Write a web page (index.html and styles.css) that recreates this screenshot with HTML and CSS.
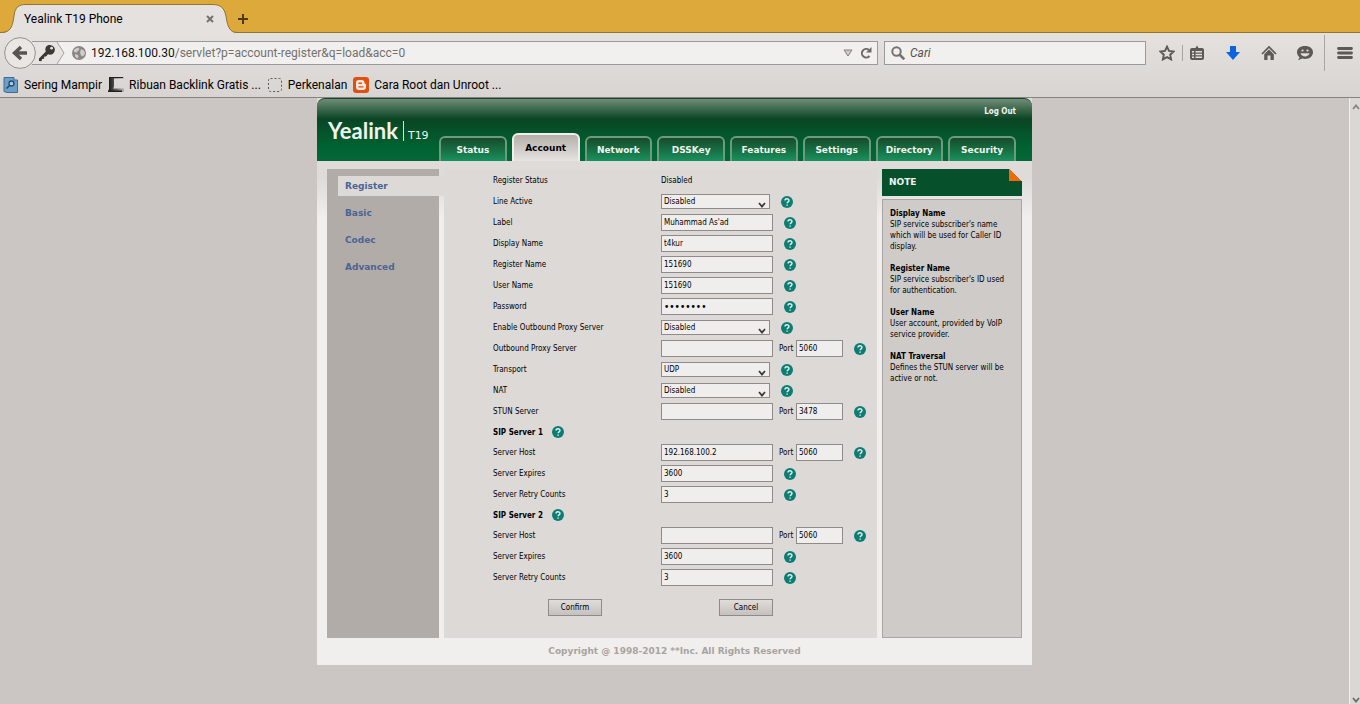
FILE: index.html
```
<!DOCTYPE html>
<html lang="en">

<head>
    <meta charset="UTF-8">
    <meta name="viewport" content="width=device-width, initial-scale=1.0">
    <title>Yealink T19 Phone</title>
    <link rel="stylesheet" href="styles.css">
</head>

<body>
    <!-- shared icons -->
    <svg class="sprite" aria-hidden="true">
        <symbol id="help" viewBox="0 0 12 12">
            <circle cx="6" cy="6" r="6" fill="#0b7d72" />
            <path d="M4 4.6C4 2.2 8 2.2 8 4.5 8 5.9 6.1 5.8 6.1 7.3M6.1 8.4v1.4" fill="none" stroke="#e6f1ee" stroke-width="1.4" />
        </symbol>
        <symbol id="chevron" viewBox="0 0 8 6">
            <path d="M1 1l3 3.6L7 1" fill="none" stroke="#3c3a39" stroke-width="1.8" />
        </symbol>
    </svg>

    <header class="browser">
        <div class="tab-strip">
            <div class="tab">
                <svg class="tab-shape" viewBox="0 0 238 29" aria-hidden="true">
                    <path d="M0 29C8 29 11 26 13 18L14 12C15 3 19 .5 26 .5H212C220 .5 224 3 226 12L227 18C229 26 232 29 238 29Z" fill="#e4e1df" />
                    <path d="M0 28.500C8 28.500 11 26 13 18L14 12C15 3 19 .5 26 .5H212C220 .5 224 3 226 12L227 18C229 26 232 28.500 238 28.500" fill="none" stroke="#8f7534" />
                </svg>
                <span class="tab-title">Yealink T19 Phone</span>
                <button class="tab-close" aria-label="Close tab">
                    <svg viewBox="0 0 8 8"><path d="M1 1l6 6M7 1L1 7" stroke="#77716d" stroke-width="2" /></svg>
                </button>
            </div>
            <button class="tab-new" aria-label="New tab">
                <svg viewBox="0 0 10 10"><path d="M5 0v10M0 5h10" stroke="#4b3c18" stroke-width="2" /></svg>
            </button>
        </div>

        <div class="toolbar">
            <button class="back" aria-label="Back">
                <svg viewBox="0 0 32 32">
                    <circle cx="16" cy="16" r="15.400" fill="#e9e6e4" stroke="#96918e" />
                    <path d="M17 10l-6.500 6 6.500 6M11 16h12" fill="none" stroke="#5a5451" stroke-width="3.400" />
                </svg>
            </button>
            <div class="url-bar">
                <svg class="key" viewBox="0 0 36 22" aria-hidden="true">
                    <path d="M0 0H25L32 11 25 22H0" fill="#e6e3e1" />
                    <path d="M25 0L32 11 25 22" fill="none" stroke="#a5a09d" />
                    <path d="M15.500 3.500C20 1.500 25 6 22 10.500 20.500 12.800 18 13 16 12.200L14 14.500 12.300 14.600 12 16.700 10 17 9.500 19.200 7 19V16.500L13.800 9.500C12.800 7 13.500 4.500 15.500 3.500Z" fill="#3b3735" />
                    <circle cx="19.600" cy="6.200" r="1.400" fill="#e6e3e1" />
                </svg>
                <svg class="globe" viewBox="0 0 14 14" aria-hidden="true">
                    <circle cx="7" cy="7" r="7" fill="#8b8683" />
                    <path d="M2 3.500L6 1.500 7.500 3 6 5 4.500 6.500 2 6ZM9 3l3 1.500 1 3-2 3-2-1-1-3ZM3 8l3 1 .5 2-1 1.500L3 10.500Z" fill="#d0ccca" />
                </svg>
                <div class="url-field">
                    <div class="url-text" aria-hidden="true"><b>192.168.100.30</b>/servlet?p=account-register&amp;q=load&amp;acc=0</div>
                    <input type="text" aria-label="Address">
                </div>
                <svg class="dropmark" viewBox="0 0 10 8" aria-hidden="true"><path d="M1 1h8L5 7Z" fill="#cfcbc8" stroke="#85807d" /></svg>
                <button class="reload" aria-label="Reload">
                    <svg viewBox="0 0 12 12"><path d="M9.500 9A4.300 4.300 0 1 1 8.800 2.800" fill="none" stroke="#6d6865" stroke-width="2" /><path d="M11.500 0v5.500H6Z" fill="#6d6865" /></svg>
                </button>
            </div>
            <div class="search-bar">
                <svg viewBox="0 0 14 14" aria-hidden="true"><circle cx="5.500" cy="5.500" r="4.200" fill="none" stroke="#78736f" stroke-width="2" /><path d="M8.500 8.500l4.800 4.800" stroke="#78736f" stroke-width="2.600" /></svg>
                <input type="text" placeholder="Cari" aria-label="Search">
            </div>
            <div class="tools">
                <button aria-label="Bookmark this page">
                    <svg viewBox="0 0 16 16"><path d="M8 1.600l2 4.300 4.600.6-3.400 3.200.9 4.700L8 12.100 3.900 14.400l.9-4.700L1.400 6.500 6 5.900Z" fill="none" stroke="#5f5956" stroke-width="1.900" /></svg>
                </button>
                <button class="divided" aria-label="Bookmarks">
                    <svg viewBox="0 0 16 16"><path d="M5 3h1.500L8 .5 9.500 3H13q2 0 2 2v8q0 2-2 2H3q-2 0-2-2V5q0-2 2-2Z" fill="#5f5956" /><path d="M3 6h2v1.500H3zM6.500 6H13v1.500H6.500zM3 8.800h2v1.500H3zM6.500 8.800H13v1.500H6.500zM3 11.600h2V13H3zM6.500 11.600H13V13H6.500z" fill="#e0dddb" /></svg>
                </button>
                <button aria-label="Downloads">
                    <svg viewBox="0 0 16 16"><path d="M5 1h6v6h4L8 15 1 7h4Z" fill="#0b63e0" /></svg>
                </button>
                <button aria-label="Home">
                    <svg viewBox="0 0 16 16"><path d="M1 9l7-7 7 7" fill="none" stroke="#5f5956" stroke-width="1.700" /><path d="M3.200 9.200L8 4.600l4.800 4.600V15H9.500v-4.500h-3V15H3.200Z" fill="#5f5956" /></svg>
                </button>
                <button aria-label="Chat">
                    <svg viewBox="0 0 16 16"><path d="M8 1c5 0 8 2.700 8 6.300S13 14 8 14c-1 0-2-.1-2.800-.4L1 15.200l1.600-3C1 11 0 9.500 0 7.300 0 3.700 3 1 8 1Z" fill="#5f5956" /><circle cx="5.500" cy="5.500" r="1.100" fill="#e0dddb" /><circle cx="10.500" cy="5.500" r="1.100" fill="#e0dddb" /><path d="M3.500 8.300h9C11.500 12.500 4.500 12.500 3.500 8.300Z" fill="#e0dddb" /></svg>
                </button>
                <button class="menu-button" aria-label="Menu">
                    <svg viewBox="0 0 16 16"><path d="M1.500 3.500h13M1.500 8h13M1.500 12.500h13" stroke="#5f5956" stroke-width="2.800" stroke-linecap="round" /></svg>
                </button>
            </div>
        </div>

        <nav class="bookmarks">
            <a href="#">
                <svg viewBox="0 0 16 16" aria-hidden="true"><path d="M1 .5h10V3h3.500v12.500H4l-3-1Z" fill="#6d9ec4" stroke="#3c6c95" /><circle cx="8.500" cy="6.500" r="2.500" fill="#a8cbe4" stroke="#1f4a72" stroke-width="1.300" /><path d="M6.500 8.500l-3 3" stroke="#1f4a72" stroke-width="1.600" /></svg>
                Sering Mampir
            </a>
            <a href="#">
                <svg viewBox="0 0 16 16" aria-hidden="true"><defs><linearGradient id="fade"><stop offset="0" stop-color="#111" /><stop offset="1" stop-color="#b9b4b1" /></linearGradient></defs><path d="M1 0h15v1.500H6V10l-1 1.500H16V15H0L1 12Z" fill="url(#fade)" /><path d="M0 13.500h14V15H0ZM1 0h14v1H1Z" fill="#222" /></svg>
                Ribuan Backlink Gratis ...
            </a>
            <a href="#">
                <svg viewBox="0 0 16 16" aria-hidden="true"><rect x="1.500" y="1.500" width="13" height="13" rx="2" fill="none" stroke="#5b5653" stroke-dasharray="2 2" /></svg>
                Perkenalan
            </a>
            <a href="#">
                <svg viewBox="0 0 16 16" aria-hidden="true"><rect width="16" height="16" rx="3" fill="#e0500f" /><path d="M5.800 3h3q2.600 0 2.600 2.600 0 1.200.8 1.200.8.200.8 1V10q0 3-3 3H6q-3 0-3-3V6q0-3 2.800-3Z" fill="#f3e8e2" /><path d="M6 6.200h2.500M6 9.900h4" stroke="#e0500f" stroke-width="1.400" stroke-linecap="round" /></svg>
                Cara Root dan Unroot ...
            </a>
        </nav>
    </header>

    <div class="viewport">
        <main class="page">
            <div class="phone">
                <div class="banner">
                    <div class="brand"><span class="logo">Yealink</span><span class="model">T19</span></div>
                    <div class="banner-right">
                        <a class="logout" href="#">Log Out</a>
                        <nav class="menu">
                            <a href="#">Status</a>
                            <a href="#" class="active">Account</a>
                            <a href="#">Network</a>
                            <a href="#">DSSKey</a>
                            <a href="#">Features</a>
                            <a href="#">Settings</a>
                            <a href="#">Directory</a>
                            <a href="#">Security</a>
                        </nav>
                    </div>
                </div>

                <div class="columns">
                    <nav class="side">
                        <a href="#" class="active">Register</a>
                        <a href="#">Basic</a>
                        <a href="#">Codec</a>
                        <a href="#">Advanced</a>
                    </nav>

                    <form class="account">
                        <div class="row">
                            <span class="name">Register Status</span>
                            <span>Disabled</span>
                        </div>
                        <div class="row">
                            <label class="name" for="active">Line Active</label>
                            <span class="select"><select id="active"><option>Disabled</option><option>Enabled</option></select><svg><use href="#chevron" /></svg></span>
                            <svg class="help"><use href="#help" /></svg>
                        </div>
                        <div class="row">
                            <label class="name" for="label">Label</label>
                            <input id="label" type="text" value="Muhammad As'ad">
                            <svg class="help"><use href="#help" /></svg>
                        </div>
                        <div class="row">
                            <label class="name" for="display">Display Name</label>
                            <input id="display" type="text" value="t4kur">
                            <svg class="help"><use href="#help" /></svg>
                        </div>
                        <div class="row">
                            <label class="name" for="register">Register Name</label>
                            <input id="register" type="text" value="151690">
                            <svg class="help"><use href="#help" /></svg>
                        </div>
                        <div class="row">
                            <label class="name" for="user">User Name</label>
                            <input id="user" type="text" value="151690">
                            <svg class="help"><use href="#help" /></svg>
                        </div>
                        <div class="row">
                            <label class="name" for="password">Password</label>
                            <input id="password" type="password" value="12345678">
                            <svg class="help"><use href="#help" /></svg>
                        </div>
                        <div class="row">
                            <label class="name" for="outbound">Enable Outbound Proxy Server</label>
                            <span class="select"><select id="outbound"><option>Disabled</option><option>Enabled</option></select><svg><use href="#chevron" /></svg></span>
                            <svg class="help"><use href="#help" /></svg>
                        </div>
                        <div class="row">
                            <label class="name" for="proxy">Outbound Proxy Server</label>
                            <input id="proxy" type="text">
                            <label class="port" for="proxy-port">Port</label>
                            <input id="proxy-port" class="short" type="text" value="5060">
                            <svg class="help"><use href="#help" /></svg>
                        </div>
                        <div class="row">
                            <label class="name" for="transport">Transport</label>
                            <span class="select"><select id="transport"><option>UDP</option><option>TCP</option></select><svg><use href="#chevron" /></svg></span>
                            <svg class="help"><use href="#help" /></svg>
                        </div>
                        <div class="row">
                            <label class="name" for="nat">NAT</label>
                            <span class="select"><select id="nat"><option>Disabled</option><option>STUN</option></select><svg><use href="#chevron" /></svg></span>
                            <svg class="help"><use href="#help" /></svg>
                        </div>
                        <div class="row">
                            <label class="name" for="stun">STUN Server</label>
                            <input id="stun" type="text">
                            <label class="port" for="stun-port">Port</label>
                            <input id="stun-port" class="short" type="text" value="3478">
                            <svg class="help"><use href="#help" /></svg>
                        </div>

                        <div class="row section">
                            <b>SIP Server 1</b>
                            <svg class="help"><use href="#help" /></svg>
                        </div>
                        <div class="row">
                            <label class="name" for="host1">Server Host</label>
                            <input id="host1" type="text" value="192.168.100.2">
                            <label class="port" for="port1">Port</label>
                            <input id="port1" class="short" type="text" value="5060">
                            <svg class="help"><use href="#help" /></svg>
                        </div>
                        <div class="row">
                            <label class="name" for="expires1">Server Expires</label>
                            <input id="expires1" type="text" value="3600">
                            <svg class="help"><use href="#help" /></svg>
                        </div>
                        <div class="row">
                            <label class="name" for="retry1">Server Retry Counts</label>
                            <input id="retry1" type="text" value="3">
                            <svg class="help"><use href="#help" /></svg>
                        </div>

                        <div class="row section">
                            <b>SIP Server 2</b>
                            <svg class="help"><use href="#help" /></svg>
                        </div>
                        <div class="row">
                            <label class="name" for="host2">Server Host</label>
                            <input id="host2" type="text">
                            <label class="port" for="port2">Port</label>
                            <input id="port2" class="short" type="text" value="5060">
                            <svg class="help"><use href="#help" /></svg>
                        </div>
                        <div class="row">
                            <label class="name" for="expires2">Server Expires</label>
                            <input id="expires2" type="text" value="3600">
                            <svg class="help"><use href="#help" /></svg>
                        </div>
                        <div class="row">
                            <label class="name" for="retry2">Server Retry Counts</label>
                            <input id="retry2" type="text" value="3">
                            <svg class="help"><use href="#help" /></svg>
                        </div>

                        <div class="buttons">
                            <button type="button">Confirm</button>
                            <button type="button">Cancel</button>
                        </div>
                    </form>

                    <aside class="note">
                        <h2>NOTE</h2>
                        <dl>
                            <dt>Display Name</dt>
                            <dd>SIP service subscriber's name which will be used for Caller ID display.</dd>
                            <dt>Register Name</dt>
                            <dd>SIP service subscriber's ID used for authentication.</dd>
                            <dt>User Name</dt>
                            <dd>User account, provided by VoIP service provider.</dd>
                            <dt>NAT Traversal</dt>
                            <dd>Defines the STUN server will be active or not.</dd>
                        </dl>
                    </aside>
                </div>

                <footer>Copyright @ 1998-2012 **Inc. All Rights Reserved</footer>
            </div>
        </main>
        <div class="scrollbar" aria-hidden="true">
            <svg viewBox="0 0 8 6"><path d="M1 5l3-3.500L7 5" fill="none" stroke="#8a8582" stroke-width="1.800" /></svg>
            <svg viewBox="0 0 8 6"><path d="M1 1l3 3.500L7 1" fill="none" stroke="#6f6a67" stroke-width="1.800" /></svg>
        </div>
    </div>
</body>

</html>
```
FILE: styles.css
```
:root {
    --pageBg: #cbc6c3;
    --panel: #f0efed;
    --content: #dcd9d7;
    --field: #efeeec;
    --line: #8f8b89;
    --green: #06502c;
}

* {
    padding: 0;
    margin: 0;
    box-sizing: border-box;
}

body {
    display: flex;
    flex-direction: column;
    height: 100vh;
    overflow: hidden;
    font-family: "DejaVu Sans Condensed", "DejaVu Sans", sans-serif;
    font-size: 8px;
    color: #000;
    background-color: var(--pageBg);
}

a {
    color: inherit;
    text-decoration: none;
}

button,
input,
select {
    font: inherit;
    color: inherit;
}

svg {
    display: block;
    flex: none;
}

.sprite {
    position: absolute;
    width: 0;
    height: 0;
}

/* browser window start */
.browser {
    flex: none;
    border-bottom: 1px solid #878381;
    background: linear-gradient(#e4e1df 33px, #d8d4d1);
    font-family: Roboto, sans-serif;
    font-size: 12px;
}

.browser button {
    border: 0;
    background: none;
}

.browser button svg {
    width: 100%;
    height: 100%;
}

.tab-strip {
    display: flex;
    align-items: flex-end;
    height: 33px;
    border-bottom: 1px solid #8f7534;
    background-color: #dca93a;
}

.tab {
    position: relative;
    display: flex;
    align-items: center;
    width: 238px;
    height: 29px;
    margin-bottom: -1px;
    padding: 0 24px;
}

.tab-shape {
    position: absolute;
    inset: 0;
    width: 100%;
    height: 100%;
}

.tab-title {
    position: relative;
    flex: 1;
}

.tab-close {
    position: relative;
    width: 8px;
    height: 8px;
}

.tab-new {
    width: 10px;
    height: 10px;
    margin-bottom: 8px;
}

.toolbar {
    display: flex;
    align-items: center;
    height: 40px;
    padding: 0 7px 0 4px;
}

.back {
    position: relative;
    z-index: 1;
    width: 32px;
    height: 32px;
}

.url-bar,
.search-bar {
    display: flex;
    align-items: center;
    height: 24px;
    border: 1px solid #979c9a;
    background-color: #f1f0ee;
}

.url-bar {
    flex: 1;
    margin-left: -4px;
    padding-right: 5px;
    border-left: 0;
}

.key {
    width: 36px;
    height: 22px;
}

.globe {
    width: 14px;
    height: 14px;
    margin-left: 4px;
}

.url-field {
    position: relative;
    flex: 1;
    margin-left: 5px;
}

.url-text {
    color: #75706d;
}

.url-text b {
    font-weight: normal;
    color: #111;
}

.url-bar input {
    position: absolute;
    inset: 0;
    width: 100%;
    border: 0;
    background: none;
}

.dropmark {
    width: 10px;
    height: 8px;
}

.reload {
    width: 12px;
    height: 12px;
    margin-left: 7px;
}

.search-bar {
    width: 262px;
    margin-left: 6px;
    padding-left: 6px;
}

.search-bar svg {
    width: 14px;
    height: 14px;
}

.search-bar input {
    flex: 1;
    height: 20px;
    margin-left: 5px;
    border: 0;
    background: none;
}

.search-bar input::placeholder {
    font-style: italic;
    color: #55504d;
}

.tools {
    display: flex;
    align-items: center;
    gap: 20px;
    margin-left: 13px;
}

.tools button {
    width: 16px;
    height: 16px;
}

.tools .divided {
    width: 23px;
    margin-left: -13px;
    padding-left: 6px;
    border-left: 1px solid #aaa5a2;
}

.tools .menu-button {
    width: 29px;
    height: 36px;
    margin-left: -9px;
    padding-left: 12px;
    border-left: 1px solid #aaa5a2;
}

.bookmarks {
    display: flex;
    gap: 6px;
    height: 24px;
    padding: 0 3px;
}

.bookmarks a {
    display: flex;
    align-items: center;
    gap: 5px;
}

.bookmarks svg {
    width: 16px;
    height: 16px;
}

/* browser window end */

.viewport {
    display: flex;
    flex: 1;
    min-height: 0;
}

.page {
    flex: 1;
    overflow: hidden;
}

.scrollbar {
    display: flex;
    flex-direction: column;
    justify-content: space-between;
    align-items: flex-end;
    width: 11px;
    padding: 6px 0 1px;
    border-left: 1px solid #f3f1ef;
    background-color: #dad7d5;
}

.scrollbar svg {
    width: 8px;
    height: 6px;
}

.phone {
    width: 715px;
    margin: 0 auto;
    background: linear-gradient(#dedbd9 80px, var(--panel) 120px);
}

/* banner start */
.banner {
    display: flex;
    justify-content: space-between;
    height: 63px;
    padding: 0 16px 0 11px;
    border-top: 1px solid #17452a;
    border-radius: 8px 8px 0 0;
    background: linear-gradient(#6f8d78, #0a4524 20px, #00602f 45px, #05683a);
    color: #f0f3ee;
}

.brand {
    display: flex;
    align-items: flex-end;
    height: 42px;
}

.logo {
    padding-right: 5px;
    border-right: 1px solid #d5e2d8;
    font: bold 22px/20px Lato, sans-serif;
}

.model {
    margin-left: 4px;
    font: 11px/11px "DejaVu Sans", sans-serif;
}

.banner-right {
    display: flex;
    flex-direction: column;
    justify-content: space-between;
    width: 577px;
}

.logout {
    align-self: flex-end;
    margin-top: 8px;
    font-weight: bold;
}

.menu {
    display: flex;
    align-items: flex-end;
    gap: 5px;
    font: bold 9px "DejaVu Sans", sans-serif;
}

.menu a {
    display: flex;
    flex: 1 1 0;
    justify-content: center;
    align-items: center;
    height: 25px;
    border: 2px solid #6c9b7d;
    border-bottom: 0;
    border-radius: 6px 6px 0 0;
    background: linear-gradient(#164b29, #19915d);
}

.menu .active {
    height: 28px;
    border-color: #f0efed;
    background: linear-gradient(#b5aea9, #e6e3e1);
    color: #000;
}

/* banner end */

.columns {
    display: flex;
    padding: 8px 10px 0;
}

.side {
    display: flex;
    flex-direction: column;
    gap: 7px;
    width: 112px;
    padding: 7px 0 0 11px;
    background-color: #b2aca8;
    font-family: "DejaVu Sans", sans-serif;
    font-size: 9px;
    font-weight: bold;
    color: #4a6494;
}

.side a {
    padding-left: 7px;
    line-height: 20px;
}

.side .active {
    margin-right: -5px;
    background-color: var(--content);
}

/* form start */
.account {
    flex: 1;
    margin: 0 5px;
    padding: 1px 0 22px 49px;
    background-color: var(--content);
}

.row {
    display: flex;
    align-items: center;
    height: 21px;
}

.section {
    height: 20px;
}

.name {
    width: 168px;
}

.row input,
.select select {
    width: 112px;
    height: 17px;
    padding: 0 2px;
    border: 1px solid var(--line);
    background-color: var(--field);
}

.row .short {
    width: 47px;
}

.row input[type="password"] {
    font-size: 10px;
}

.port {
    width: 17px;
    margin-left: 6px;
}

.select {
    position: relative;
}

.select select {
    display: block;
    width: 109px;
    height: 15px;
    appearance: none;
}

.select svg {
    position: absolute;
    right: 4px;
    bottom: 1px;
    width: 8px;
    height: 6px;
    pointer-events: none;
}

.help {
    width: 12px;
    height: 12px;
    margin-left: 11px;
}

.section .help {
    margin-left: 9px;
}

.buttons {
    display: flex;
    gap: 117px;
    margin: 11px 0 0 55px;
}

.buttons button {
    width: 54px;
    height: 17px;
    border: 1px solid var(--line);
    background: linear-gradient(#dfdcda, #c6c1be);
}

/* form end */

/* note start */
.note {
    display: flex;
    flex-direction: column;
    width: 140px;
}

.note h2 {
    position: relative;
    margin-bottom: 3px;
    padding-left: 7px;
    background-color: var(--green);
    font-family: "DejaVu Sans", sans-serif;
    font-size: 9px;
    line-height: 27px;
    color: #f0f3ee;
}

/* folded corner */
.note h2::after {
    content: "";
    position: absolute;
    top: 0;
    right: 0;
    width: 13px;
    height: 12px;
    background: linear-gradient(to top right, #f06a0c 50%, #dedbd9 50%);
}

.note dl {
    flex: 1;
    padding: 8px 7px;
    border: 1px solid #aaa5a3;
    background-color: #cfcbc8;
    line-height: 11px;
}

.note dt {
    font-weight: bold;
}

.note dd {
    margin-bottom: 11px;
}

/* note end */

footer {
    font-family: "DejaVu Sans", sans-serif;
    font-size: 9px;
    font-weight: bold;
    line-height: 27px;
    text-align: center;
    color: #a9a4a0;
}
```
